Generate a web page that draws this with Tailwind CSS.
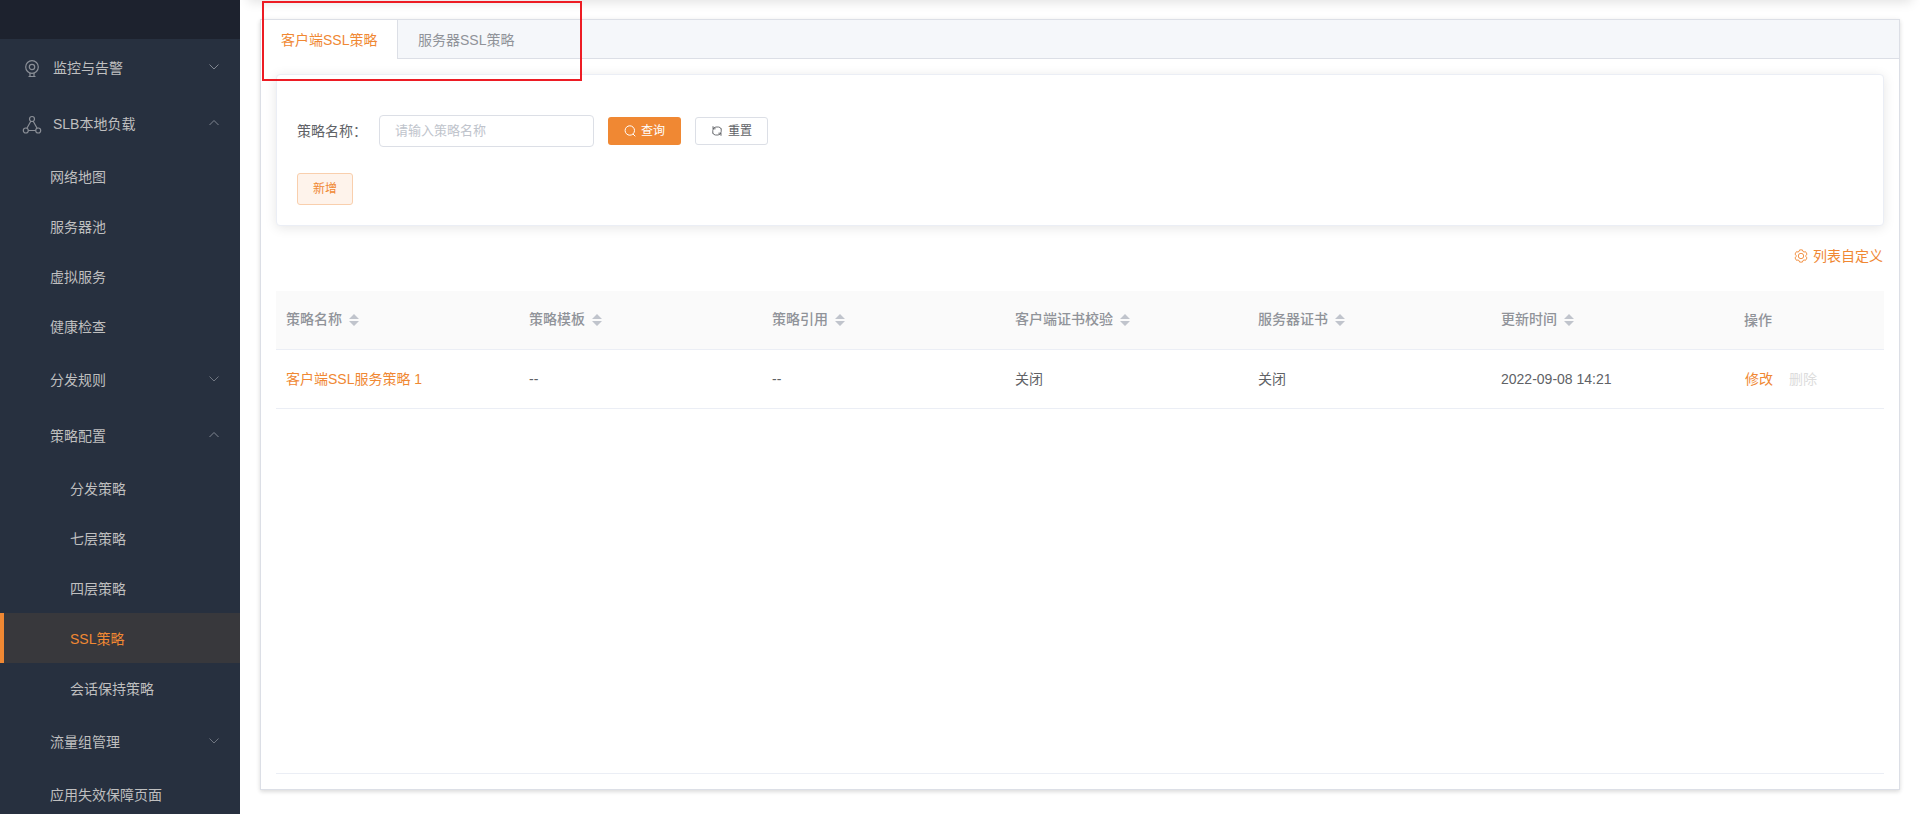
<!DOCTYPE html>
<html lang="zh-CN">
<head>
  <meta charset="UTF-8" />
  <title>SSL策略</title>
  <meta name="viewport" content="width=device-width, initial-scale=1" />
  <script src="https://cdn.jsdelivr.net/npm/@tailwindcss/browser@4"></script>
  <style> body { font-family: 'Liberation Sans', 'Noto Sans CJK SC', sans-serif; } </style>
</head>

<body class="h-screen overflow-hidden bg-white text-sm text-[#606266] flex">
  <!-- icons -->
  <svg class="hidden">
    <symbol id="down" viewBox="0 0 12 12"><path d="M1.5 3.5 6 8l4.500-4.500" fill="none" stroke="currentColor" /></symbol>
    <symbol id="up" viewBox="0 0 12 12"><path d="M1.500 8 6 3.500 10.500 8" fill="none" stroke="currentColor" /></symbol>
    <symbol id="sort" viewBox="0 0 10 12"><path d="M0 5 5 0l5 5zM0 7l5 5 5-5z" fill="currentColor" /></symbol>
  </svg>

  <!-- sidebar -->
  <aside class="w-60 h-full shrink-0 overflow-hidden bg-[#27303f] text-[#bfbfbf]">
    <div class="h-[39px] bg-[#1d222e]"></div>
    <nav class="leading-none">
      <a class="h-14 flex items-center pl-[22px] pr-5">
        <svg class="w-5 h-5 mr-[11px] mt-[3px] text-[#8b8f97]" viewBox="0 0 20 20" fill="none" stroke="currentColor" stroke-width="1.200">
          <circle cx="10" cy="8" r="6.300" /><circle cx="10" cy="8" r="2.700" />
          <path d="M8 14v3M12 14v3M6.500 17.500h7" />
        </svg>
        <span class="pt-px">监控与告警</span>
        <svg class="w-3 h-3 ml-auto mb-px text-[#808691]"><use href="#down" /></svg>
      </a>
      <a class="h-14 flex items-center pl-[22px] pr-5">
        <svg class="w-5 h-5 mr-[11px] mt-[3px] text-[#8b8f97]" viewBox="0 0 20 20" fill="none" stroke="currentColor" stroke-width="1.200">
          <circle cx="10" cy="4" r="2.500" /><circle cx="3.800" cy="15.500" r="2.500" /><circle cx="16.200" cy="15.500" r="2.500" />
          <path d="M8.800 6.200 4.900 13.200M11.200 6.200l3.900 7M6.300 15.500h7.400" />
        </svg>
        <span class="pt-px">SLB本地负载</span>
        <svg class="w-3 h-3 ml-auto mb-px text-[#808691]"><use href="#up" /></svg>
      </a>
      <a class="h-[50px] flex items-center pl-[50px] pt-0.5">网络地图</a>
      <a class="h-[50px] flex items-center pl-[50px] pt-0.5">服务器池</a>
      <a class="h-[50px] flex items-center pl-[50px] pt-0.5">虚拟服务</a>
      <a class="h-[50px] flex items-center pl-[50px] pt-0.5">健康检查</a>
      <a class="h-14 flex items-center pl-[50px] pr-5">
        <span class="pt-px">分发规则</span>
        <svg class="w-3 h-3 ml-auto mb-px text-[#6f7580]"><use href="#down" /></svg>
      </a>
      <a class="h-14 flex items-center pl-[50px] pr-5">
        <span class="pt-px">策略配置</span>
        <svg class="w-3 h-3 ml-auto mb-px text-[#808691]"><use href="#up" /></svg>
      </a>
      <a class="h-[50px] flex items-center pl-[70px] pt-0.5">分发策略</a>
      <a class="h-[50px] flex items-center pl-[70px] pt-0.5">七层策略</a>
      <a class="h-[50px] flex items-center pl-[70px] pt-0.5">四层策略</a>
      <a class="h-[50px] flex items-center pl-[66px] pt-0.5 border-l-4 border-[#f08833] bg-[#38383c] text-[#f08833]">SSL策略</a>
      <a class="h-[50px] flex items-center pl-[70px] pt-0.5">会话保持策略</a>
      <a class="h-14 flex items-center pl-[50px] pr-5">
        <span class="pt-0.5">流量组管理</span>
        <svg class="w-3 h-3 ml-auto mb-px text-[#6f7580]"><use href="#down" /></svg>
      </a>
      <a class="h-[50px] flex items-center pl-[50px] pt-0.5">应用失效保障页面</a>
    </nav>
  </aside>

  <main class="relative flex-1 overflow-hidden px-5 pt-[19px]">
    <!-- shadow of the top bar -->
    <div class="absolute left-2 right-2 -top-5 h-5 shadow-[0_2px_12px_rgba(0,0,0,0.12)]"></div>

    <section class="relative h-[771px] flex flex-col bg-white border border-[#dcdfe6] shadow-[0_2px_4px_rgba(0,0,0,0.12),0_0_6px_rgba(0,0,0,0.04)]">
      <div class="h-[39px] shrink-0 flex bg-[#f5f7fa] leading-[40px]">
        <div class="w-[137px] pl-5 bg-white border-r border-[#dcdfe6] text-[#f08833]">客户端SSL策略</div>
        <div class="flex-1 pl-5 border-b border-[#dcdfe6] text-[#909399]">服务器SSL策略</div>
      </div>

      <div class="flex-1 flex flex-col px-[15px] pt-[15px]">
        <!-- search -->
        <div class="h-[152px] shrink-0 rounded border border-[#ebeef5] bg-white px-5 pt-10 shadow-[0_2px_12px_rgba(0,0,0,0.1)]">
          <div class="flex items-center h-8">
            <label class="w-[82px] pb-px">策略名称：</label>
            <input type="text" placeholder="请输入策略名称" class="w-[215px] h-8 px-[15px] pb-0.5 rounded border border-[#dcdfe6] text-[13px] placeholder:text-[#c0c4cc]" />
            <button class="ml-3.5 w-[73px] h-7 flex items-center justify-center gap-[5px] rounded-[3px] bg-[#f08833] text-white text-xs">
              <svg class="w-3 h-3" viewBox="0 0 12 12" fill="none" stroke="currentColor"><circle cx="5.800" cy="5.500" r="4.700" /><path d="m9 9 2.300 2.300" /></svg>
              查询
            </button>
            <button class="ml-3.5 w-[73px] h-7 flex items-center justify-center gap-[5px] rounded-[3px] border border-[#dcdfe6] text-xs">
              <svg class="w-3 h-3" viewBox="0 0 12 12" fill="none" stroke="currentColor" stroke-width=".9"><path d="M1.800 8.500V5.300A3.300 3.300 0 0 1 5 2h2.500a3 3 0 0 1 2.700 2.200M2 1.200v2.600h2.600M10.200 3.500v3.200A3.300 3.300 0 0 1 7 10H4.500a3 3 0 0 1-2.700-2.200M10 10.800V8.200H7.400" /></svg>
              重置
            </button>
          </div>
          <button class="mt-[26px] w-14 h-8 block rounded-[3px] border border-[#f9cfad] bg-[#fef3eb] text-[#f08833] text-xs">新增</button>
        </div>

        <div class="h-[65px] shrink-0 pb-[5px] pr-px flex items-center justify-end gap-[5px] text-[#f08833]">
          <svg class="w-3.5 h-3.5" viewBox="0 0 14 14" fill="none" stroke="currentColor" stroke-width=".9">
            <path d="M5.600.9h2.800l.5 1.500 1.100.6 1.600-.3L13 5.100 11.900 6.300v1.400L13 8.900l-1.400 2.400-1.600-.3-1.100.6-.5 1.500H5.600l-.5-1.500L4 11l-1.600.3L1 8.900l1.100-1.200V6.300L1 5.100l1.400-2.400L4 3l1.100-.6z" />
            <circle cx="7" cy="7" r="2.700" />
          </svg>
          <span>列表自定义</span>
        </div>

        <!-- table -->
        <div class="h-[483px] shrink-0 border-b border-[#ebeef5]">
          <div class="grid grid-cols-[repeat(6,243px)_150px] items-center h-[59px] bg-[#fafafa] border-b border-[#ebeef5] text-[#909399] font-medium">
            <div class="pl-2.5 flex items-center gap-[7px]"><span class="pb-0.5">策略名称</span><svg class="w-2.5 h-3 mb-px text-[#c0c4cc]"><use href="#sort" /></svg></div>
            <div class="pl-2.5 flex items-center gap-[7px]"><span class="pb-0.5">策略模板</span><svg class="w-2.5 h-3 mb-px text-[#c0c4cc]"><use href="#sort" /></svg></div>
            <div class="pl-2.5 flex items-center gap-[7px]"><span class="pb-0.5">策略引用</span><svg class="w-2.5 h-3 mb-px text-[#c0c4cc]"><use href="#sort" /></svg></div>
            <div class="pl-2.5 flex items-center gap-[7px]"><span class="pb-0.5">客户端证书校验</span><svg class="w-2.5 h-3 mb-px text-[#c0c4cc]"><use href="#sort" /></svg></div>
            <div class="pl-2.5 flex items-center gap-[7px]"><span class="pb-0.5">服务器证书</span><svg class="w-2.5 h-3 mb-px text-[#c0c4cc]"><use href="#sort" /></svg></div>
            <div class="pl-2.5 flex items-center gap-[7px]"><span class="pb-0.5">更新时间</span><svg class="w-2.5 h-3 mb-px text-[#c0c4cc]"><use href="#sort" /></svg></div>
            <div class="pl-2.5">操作</div>
          </div>
          <div class="grid grid-cols-[repeat(6,243px)_150px] items-center h-[59px] border-b border-[#ebeef5]">
            <div class="pl-2.5 text-[#f08833]">客户端SSL服务策略 1</div>
            <div class="pl-2.5">--</div>
            <div class="pl-2.5">--</div>
            <div class="pl-2.5">关闭</div>
            <div class="pl-2.5">关闭</div>
            <div class="pl-2.5">2022-09-08 14:21</div>
            <div class="pl-[11px] flex gap-4"><a class="text-[#f08833]">修改</a><a class="text-[#dcdcdc]">删除</a></div>
          </div>
        </div>
      </div>
    </section>

    <!-- highlight around the tabs -->
    <div class="absolute left-[22px] top-px w-80 h-20 border-2 border-[#ed1c24]"></div>
  </main>
</body>
</html>
